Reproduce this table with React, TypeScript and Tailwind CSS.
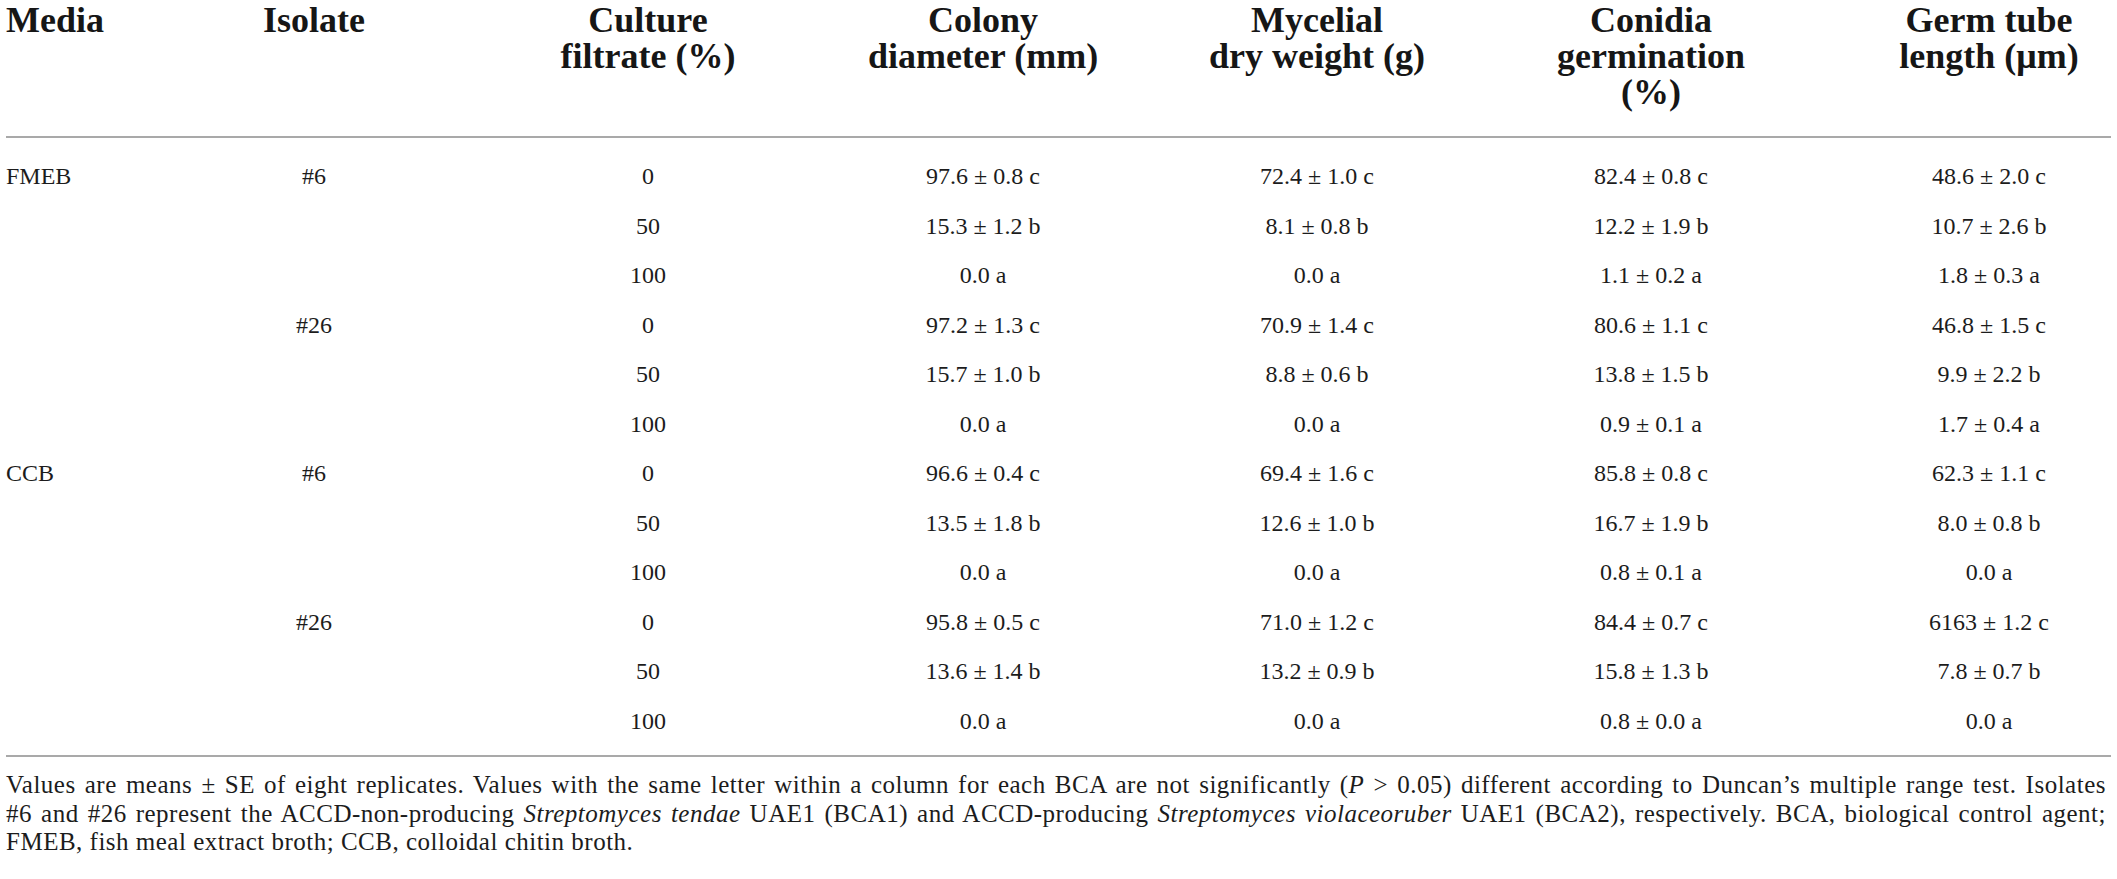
/**
 * CULTURE FILTRATE TABLE
 *
 * Effect of culture filtrates of the two isolates on fungal growth,
 * shown per medium, isolate and filtrate concentration, with footnote.
 */

// ============================================================================
// DATA
// ============================================================================

type Row = {
  media?: string;
  isolate?: string;
  filtrate: string;
  values: [string, string, string, string];
};

const ROWS: Row[] = [
  { media: "FMEB", isolate: "#6", filtrate: "0", values: ["97.6 ± 0.8 c", "72.4 ± 1.0 c", "82.4 ± 0.8 c", "48.6 ± 2.0 c"] },
  { filtrate: "50", values: ["15.3 ± 1.2 b", "8.1 ± 0.8 b", "12.2 ± 1.9 b", "10.7 ± 2.6 b"] },
  { filtrate: "100", values: ["0.0 a", "0.0 a", "1.1 ± 0.2 a", "1.8 ± 0.3 a"] },
  { isolate: "#26", filtrate: "0", values: ["97.2 ± 1.3 c", "70.9 ± 1.4 c", "80.6 ± 1.1 c", "46.8 ± 1.5 c"] },
  { filtrate: "50", values: ["15.7 ± 1.0 b", "8.8 ± 0.6 b", "13.8 ± 1.5 b", "9.9 ± 2.2 b"] },
  { filtrate: "100", values: ["0.0 a", "0.0 a", "0.9 ± 0.1 a", "1.7 ± 0.4 a"] },
  { media: "CCB", isolate: "#6", filtrate: "0", values: ["96.6 ± 0.4 c", "69.4 ± 1.6 c", "85.8 ± 0.8 c", "62.3 ± 1.1 c"] },
  { filtrate: "50", values: ["13.5 ± 1.8 b", "12.6 ± 1.0 b", "16.7 ± 1.9 b", "8.0 ± 0.8 b"] },
  { filtrate: "100", values: ["0.0 a", "0.0 a", "0.8 ± 0.1 a", "0.0 a"] },
  { isolate: "#26", filtrate: "0", values: ["95.8 ± 0.5 c", "71.0 ± 1.2 c", "84.4 ± 0.7 c", "6163 ± 1.2 c"] },
  { filtrate: "50", values: ["13.6 ± 1.4 b", "13.2 ± 0.9 b", "15.8 ± 1.3 b", "7.8 ± 0.7 b"] },
  { filtrate: "100", values: ["0.0 a", "0.0 a", "0.8 ± 0.0 a", "0.0 a"] },
];

// shared column template so header and body line up
const GRID = "grid grid-cols-[141px_334px_334px_336px_332px_336px_292px]";

// ============================================================================
// PIECES
// ============================================================================

function Rule() {
  return <div className="h-[2px] bg-[#a9a9a9]" />;
}

function HeaderRow() {
  return (
    <div className={`${GRID} pt-[2px] pb-[26px] text-[36px] leading-[36px] font-bold text-[#161616]`}>
      <div className="text-left">Media</div>
      <div className="text-center">Isolate</div>
      <div className="text-center">
        Culture
        <br />
        filtrate (%)
      </div>
      <div className="text-center">
        Colony
        <br />
        diameter (mm)
      </div>
      <div className="text-center">
        Mycelial
        <br />
        dry weight (g)
      </div>
      <div className="text-center">
        Conidia
        <br />
        germination
        <br />
        (%)
      </div>
      <div className="pl-12 text-center">
        Germ tube
        <br />
        length (μm)
      </div>
    </div>
  );
}

function DataRow({ row }: { row: Row }) {
  return (
    <div className={`${GRID} text-[24px] leading-[49.5px] text-[#1c1c1c]`}>
      <div className="text-left">{row.media}</div>
      <div className="text-center">{row.isolate}</div>
      <div className="text-center">{row.filtrate}</div>
      {row.values.map((v, i) => (
        <div key={`v-${i}`} className={i === 3 ? "pl-12 text-center" : "text-center"}>
          {v}
        </div>
      ))}
    </div>
  );
}

// ============================================================================
// MAIN
// ============================================================================

export default function App() {
  return (
    <div className="min-h-screen overflow-hidden bg-white px-[6px] font-['Liberation_Serif',serif] text-[#1c1c1c]">
      <HeaderRow />
      <Rule />

      <div className="pt-[14px] pb-[9px]">
        {ROWS.map((row, i) => (
          <DataRow key={`row-${i}`} row={row} />
        ))}
      </div>

      <Rule />

      {/* Footnote: first two lines stretched to the full table width */}
      <div className="w-[2100px] pt-[14px] text-[25px] leading-[28.5px] tracking-[0.5px] whitespace-nowrap">
        <p className="text-justify [text-align-last:justify]">
          Values are means ± SE of eight replicates. Values with the same letter within a column for each BCA
          are not significantly (<i>P</i> &gt; 0.05) different according to Duncan&rsquo;s multiple range test. Isolates
        </p>
        <p className="text-justify [text-align-last:justify]">
          #6 and #26 represent the ACCD-non-producing <i>Streptomyces tendae</i> UAE1 (BCA1) and ACCD-producing{" "}
          <i>Streptomyces violaceoruber</i> UAE1 (BCA2), respectively. BCA, biological control agent;
        </p>
        <p>FMEB, fish meal extract broth; CCB, colloidal chitin broth.</p>
      </div>
    </div>
  );
}
